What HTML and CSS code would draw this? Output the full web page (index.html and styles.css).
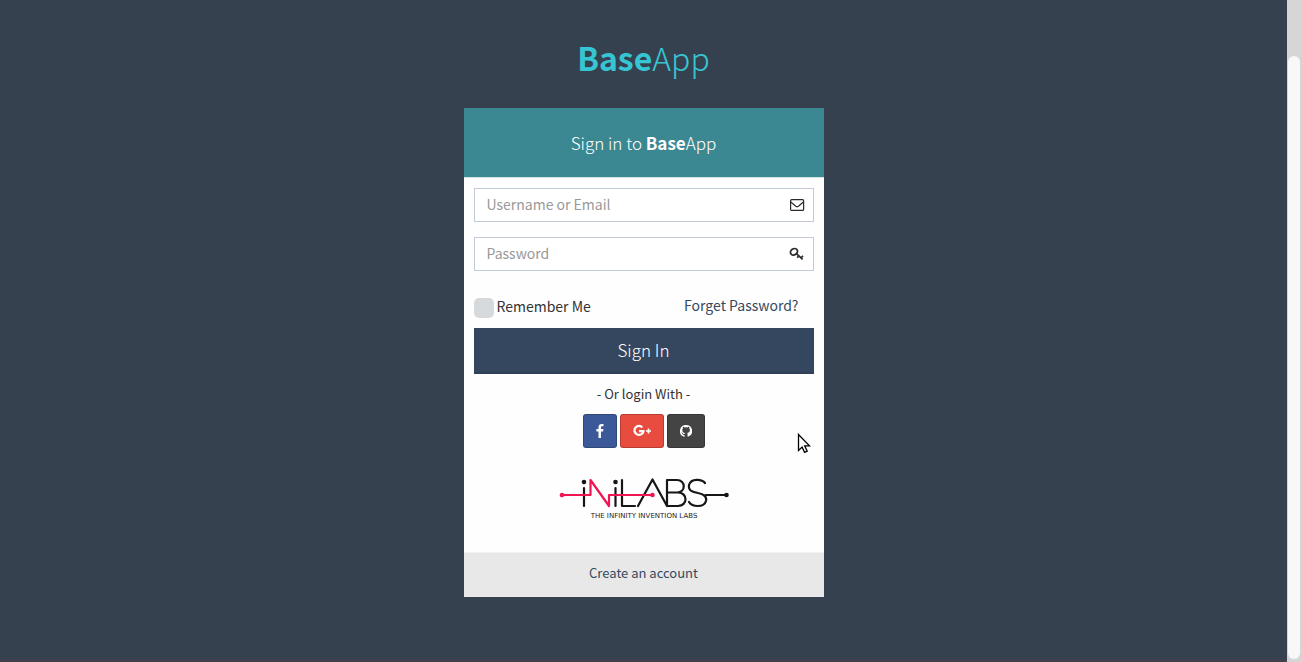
FILE: index.html
```html
<!DOCTYPE html>
<html lang="en">
<head>
<meta charset="utf-8">
<title>BaseApp - Sign in</title>
<link rel="stylesheet" href="styles.css">
</head>
<body>
<div class="window">
  <main class="page">
    <h1 class="brand"><b>Base</b>App</h1>
    <section class="card">
      <h2 class="card-header">Sign in to <b>Base</b>App</h2>
      <form class="card-body">
        <div class="field">
          <input type="text" placeholder="Username or Email" aria-label="Username or Email">
          <svg class="field-icon" viewBox="0 0 16 14" fill="none" stroke="#2b2b2b" stroke-width="1.2"><rect x="1.6" y="1.6" width="13" height="10.8" rx="1"/><path d="M1.8 4l5 4.2q1.3 1 2.6 0L14.4 4"/></svg>
        </div>
        <div class="field">
          <input type="password" placeholder="Password" aria-label="Password">
          <svg class="field-icon" viewBox="0 0 16 14" fill="none" stroke="#2b2b2b"><ellipse cx="5" cy="4.800" rx="3.700" ry="3" transform="rotate(-35 5 4.800)" stroke-width="1.800"/><path d="M7.200 6.400l6.400 6M9.800 8.800l-1.600 1.900M12 11l2-2.200" stroke-width="1.700"/></svg>
        </div>
        <div class="options">
          <label class="remember"><input type="checkbox">Remember Me</label>
          <a class="forget" href="#">Forget Password?</a>
        </div>
        <button class="submit" type="submit">Sign In</button>
        <p class="alternative">- Or login With -</p>
        <div class="social">
          <button class="facebook" type="button" aria-label="Facebook"><svg width="8" height="14" viewBox="0 0 8 14" fill="#fff"><path d="M7.5.1v2.2H6.2c-1 0-1.2.5-1.2 1.2v1.6h2.4L7.1 7.5H5V14H2.5V7.5H.4V5.1h2.1V3.3C2.500 1.200 3.800 0 5.700 0z"/></svg></button>
          <button class="google" type="button" aria-label="Google Plus"><svg width="18" height="14" viewBox="0 0 18 14" fill="none" stroke="#fff"><path d="M9.300 3.400A4.500 4.500 0 1 0 10.400 7.200H6" stroke-width="2.2"/><path d="M15.500 4.500v5M13 7h5" stroke-width="1.600"/></svg></button>
          <button class="github" type="button" aria-label="GitHub"><svg width="12" height="14" viewBox="0 0 12 14" fill="#fff"><path d="M6 1a6 6 0 0 0-1.900 11.700c.3.100.4-.1.400-.3v-1.500c-1.600.3-2-.4-2.200-.8-.1-.2-.4-.8-.7-1-.300-.1-.6-.5 0-.5s1 .5 1.200.8c.6 1 1.500.7 1.800.5.100-.4.200-.7.400-.9C3.600 8.800 2.300 8.300 2.300 6c0-.7.200-1.200.6-1.600-.1-.2-.3-.8.100-1.600 0 0 .500-.2 1.600.6a5.700 5.700 0 0 1 3 0c1.100-.8 1.600-.6 1.600-.6.300.8.100 1.400.1 1.600.4.400.6.900.6 1.600 0 2.300-1.400 2.800-2.700 3 .2.200.4.500.4 1.100v2.300c0 .2.100.4.400.3A6 6 0 0 0 6 1z"/></svg></button>
        </div>
        <svg class="logo" width="170" height="42" viewBox="-1 0 170 42" role="img" aria-label="iNiLABS, the infinity invention labs" fill="none" stroke="#161616" stroke-width="2.2" stroke-linecap="round" stroke-linejoin="round">
          <path d="M24 10v18M55.500 10v18M62 2v26h13M78 28L92.500 1.500 107 28M107 2v26h11c10 0 10-13.500 0-13.500h-11H117c9 0 9-12.500 0-12.500zM145 5c-3-4-14-5-16 2-1 6 4 7 9 8 6 1 9 4 8 8-2 7-14 6-17 1"/>
          <path d="M145.500 17H166"/>
          <circle cx="24" cy="4" r="1.200" fill="#161616"/><circle cx="55.500" cy="4" r="1.200" fill="#161616"/><circle cx="166.500" cy="17" r="1.200" fill="#161616"/>
          <path d="M3 17h27.500V2L49 28V17h43" stroke="#ee1552"/><circle cx="2" cy="17" r="1.200" stroke="#ee1552" fill="#ee1552"/><circle cx="92.500" cy="17" r="1.200" stroke="#ee1552" fill="#ee1552"/>
          <text class="tagline" x="84" y="40" text-anchor="middle" stroke="none" fill="#222">THE INFINITY INVENTION LABS</text>
        </svg>
      </form>
      <footer class="card-footer"><a href="#">Create an account</a></footer>
    </section>
    <svg class="pointer" width="14" height="21" viewBox="0 0 14 21"><path d="M1.500 1.500v16l3.600-3.400 2.500 5.300 2.600-1.300-2.500-5.200h4.800z" fill="#fff" stroke="#000" stroke-width="1.300"/></svg>
  </main>
  <div class="scrollbar"><div class="thumb"></div></div>
</div>
</body>
</html>
```
FILE: styles.css
```css
* { box-sizing: border-box; }

body {
  margin: 0;
  background: #364150;
  color: #333;
  font: 14px/20px "Noto Sans CJK SC", "Open Sans", sans-serif;
}

a { color: #34495e; text-decoration: none; }

.window { display: flex; min-height: 100vh; }

.page {
  position: relative;
  flex: 1;
  padding: 33px 20px 62px;
  border-bottom: 3px solid #41404f;
}

.brand {
  margin: 0 0 27px;
  color: #36c6d3;
  font-size: 32px;
  font-weight: 200;
  line-height: 48px;
  text-align: center;
}

.brand b { font-weight: 700; }

.card {
  width: 100%;
  max-width: 360px;
  margin: 0 auto;
  background: #fefefe;
}

.card-header {
  margin: 0;
  padding: 23px 10px 22px;
  border-bottom: 1px solid #d5e3e5;
  background: #3b8893;
  color: #fff;
  font-size: 17px;
  font-weight: 300;
  line-height: 24px;
  text-align: center;
}

.card-header b { font-weight: 700; }

.card-body { padding: 10px 10px 32px; }

.field { position: relative; margin-bottom: 15px; }

.field input {
  display: block;
  width: 100%;
  height: 34px;
  padding: 0 36px 2px 12px;
  border: 1px solid #c2cad8;
  background: #fff;
  color: #555;
  font: inherit;
}

.field input::placeholder { color: #999; opacity: 1; }

.field-icon {
  position: absolute;
  top: 10px;
  right: 9px;
  width: 16px;
  height: 14px;
}

.options {
  display: flex;
  justify-content: space-between;
  height: 42px;
  padding: 9px 15px 0 0;
}

.remember { display: flex; align-items: flex-start; gap: 3px; line-height: 22px; }

.remember input {
  width: 20px;
  height: 20px;
  margin: 3px 0 0;
  border-radius: 5px;
  background: #d7dadc;
  appearance: none;
}

.submit {
  display: block;
  width: 100%;
  height: 46px;
  border: 0;
  border-bottom: 2px solid #2f4158;
  background: #35475f;
  color: #fff;
  font: 300 17px/24px "Noto Sans CJK SC", "Open Sans", sans-serif;
}

.alternative { margin: 10px 0; font-size: 13px; text-align: center; }

.social { display: flex; justify-content: center; gap: 3px; }

.social button {
  display: flex;
  align-items: center;
  justify-content: center;
  height: 34px;
  padding: 0 12px;
  border: 1px solid #00000033;
  border-radius: 3px;
}

.facebook { background: #3b5998; }
.google { background: #e74c3f; }
.github { background: #444; }

.logo { display: block; margin: 30px auto 0; }

.tagline { font: 7px "DejaVu Sans", sans-serif; }

.card-footer {
  padding: 10px 10px 14px;
  border-top: 1px solid #f2f2f2;
  background: #e8e8e8;
  font-size: 13px;
  text-align: center;
}

.pointer { position: absolute; top: 433px; left: calc(50% + 153px); }

.scrollbar {
  width: 14px;
  padding: 56px 1px 3px;
  background: #d6d6d6;
}

.thumb { height: 100%; border-radius: 7px; background: #f8f8f8; }
```
